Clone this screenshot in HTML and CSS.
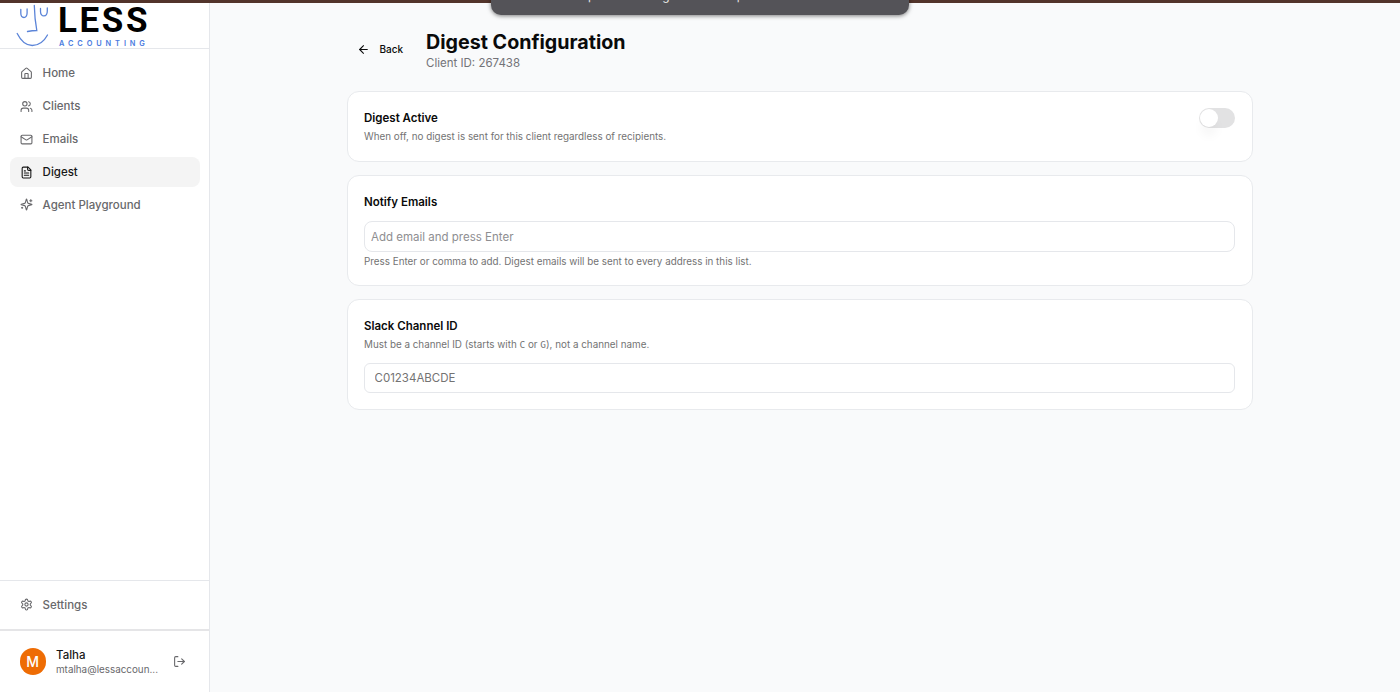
FILE: index.html
```html
<!DOCTYPE html>
<html lang="en">
<head>
    <meta charset="UTF-8">
    <meta name="viewport" content="width=device-width, initial-scale=1.0">
    <title>Digest Configuration</title>
    <link rel="stylesheet" href="styles.css">
</head>
<body>
    <div class="top-strip"></div>
    <div class="toast"><span>p</span><span>g</span><span>p</span></div>

    <div class="app">
        <!-- Sidebar -->
        <aside class="sidebar">
            <div class="logo">
                <svg class="logo-face" viewBox="0 0 34 44" fill="none" stroke="#5b84d8" stroke-width="1.3" stroke-linecap="round">
                    <path d="M4.800 6.500v3.500c0 6 6.300 6 6.300 0V6"/>
                    <path d="M24.500 5.500v3c0 6 6.800 6 6.800-.500V5"/>
                    <path d="M18.300 2.500c.2 8 .8 16 2.500 25-3 0-6 .3-9.300 1"/>
                    <path d="M1.200 30.500c4 8 9 12 15 12S28 38.500 31.500 32"/>
                </svg>
                <div class="logo-text">
                    <span class="logo-name">LESS</span>
                    <span class="logo-sub">ACCOUNTING</span>
                </div>
            </div>

            <nav class="nav">
                <a class="nav-item">
                    <svg class="icon" viewBox="0 0 24 24"><path d="M15 21v-8a1 1 0 0 0-1-1h-4a1 1 0 0 0-1 1v8"/><path d="M3 10a2 2 0 0 1 .709-1.528l7-6a2 2 0 0 1 2.582 0l7 6A2 2 0 0 1 21 10v9a2 2 0 0 1-2 2H5a2 2 0 0 1-2-2z"/></svg>
                    <span>Home</span>
                </a>
                <a class="nav-item">
                    <svg class="icon" viewBox="0 0 24 24"><path d="M16 21v-2a4 4 0 0 0-4-4H6a4 4 0 0 0-4 4v2"/><circle cx="9" cy="7" r="4"/><path d="M22 21v-2a4 4 0 0 0-3-3.870"/><path d="M16 3.130a4 4 0 0 1 0 7.750"/></svg>
                    <span>Clients</span>
                </a>
                <a class="nav-item">
                    <svg class="icon" viewBox="0 0 24 24"><rect x="2" y="4" width="20" height="16" rx="2"/><path d="m22 7-8.970 5.700a1.940 1.940 0 0 1-2.060 0L2 7"/></svg>
                    <span>Emails</span>
                </a>
                <a class="nav-item active">
                    <svg class="icon" viewBox="0 0 24 24"><path d="M15 2H6a2 2 0 0 0-2 2v16a2 2 0 0 0 2 2h12a2 2 0 0 0 2-2V7z"/><path d="M14 2v4a2 2 0 0 0 2 2h4"/><path d="M10 9H8"/><path d="M16 13H8"/><path d="M16 17H8"/></svg>
                    <span>Digest</span>
                </a>
                <a class="nav-item">
                    <svg class="icon" viewBox="0 0 24 24"><path d="M9.937 15.500A2 2 0 0 0 8.500 14.063l-6.135-1.582a.5.5 0 0 1 0-.962L8.500 9.936A2 2 0 0 0 9.937 8.500l1.582-6.135a.5.5 0 0 1 .963 0L14.063 8.500A2 2 0 0 0 15.500 9.937l6.135 1.581a.5.5 0 0 1 0 .964L15.500 14.063a2 2 0 0 0-1.437 1.437l-1.582 6.135a.5.5 0 0 1-.963 0z"/><path d="M20 3v4"/><path d="M22 5h-4"/><path d="M4 17v2"/><path d="M5 18H3"/></svg>
                    <span>Agent Playground</span>
                </a>
            </nav>

            <div class="settings">
                <a class="nav-item">
                    <svg class="icon" viewBox="0 0 24 24"><path d="M12.220 2h-.440a2 2 0 0 0-2 2v.180a2 2 0 0 1-1 1.730l-.430.250a2 2 0 0 1-2 0l-.150-.080a2 2 0 0 0-2.730.730l-.220.380a2 2 0 0 0 .730 2.730l.150.100a2 2 0 0 1 1 1.720v.510a2 2 0 0 1-1 1.740l-.150.090a2 2 0 0 0-.730 2.730l.220.380a2 2 0 0 0 2.730.730l.150-.080a2 2 0 0 1 2 0l.430.250a2 2 0 0 1 1 1.730V20a2 2 0 0 0 2 2h.440a2 2 0 0 0 2-2v-.180a2 2 0 0 1 1-1.730l.430-.250a2 2 0 0 1 2 0l.150.080a2 2 0 0 0 2.730-.730l.220-.390a2 2 0 0 0-.730-2.730l-.150-.080a2 2 0 0 1-1-1.740v-.500a2 2 0 0 1 1-1.740l.150-.090a2 2 0 0 0 .730-2.730l-.220-.380a2 2 0 0 0-2.730-.730l-.150.080a2 2 0 0 1-2 0l-.430-.250a2 2 0 0 1-1-1.730V4a2 2 0 0 0-2-2z"/><circle cx="12" cy="12" r="3"/></svg>
                    <span>Settings</span>
                </a>
            </div>

            <div class="user">
                <div class="avatar">M</div>
                <div class="user-info">
                    <div class="user-name">Talha</div>
                    <div class="user-email">mtalha@lessaccoun...</div>
                </div>
                <svg class="icon" viewBox="0 0 24 24"><path d="M9 21H5a2 2 0 0 1-2-2V5a2 2 0 0 1 2-2h4"/><path d="m16 17 5-5-5-5"/><path d="M21 12H9"/></svg>
            </div>
        </aside>

        <!-- Digest settings for one client -->
        <main class="main">
            <header class="page-header">
                <a class="back">
                    <svg class="icon" viewBox="0 0 24 24"><path d="m12 19-7-7 7-7"/><path d="M19 12H5"/></svg>
                    <span>Back</span>
                </a>
                <div>
                    <h1>Digest Configuration</h1>
                    <p class="client-id">Client ID: 267438</p>
                </div>
            </header>

            <section class="card card-active">
                <div>
                    <h2>Digest Active</h2>
                    <p class="hint">When off, no digest is sent for this client regardless of recipients.</p>
                </div>
                <div class="switch"><div class="knob"></div></div>
            </section>

            <section class="card card-emails">
                <h2>Notify Emails</h2>
                <input class="email-input" type="text" placeholder="Add email and press Enter">
                <p class="hint">Press Enter or comma to add. Digest emails will be sent to every address in this list.</p>
            </section>

            <section class="card card-slack">
                <h2>Slack Channel ID</h2>
                <p class="hint">Must be a channel ID (starts with <code>C</code> or <code>G</code>), not a channel name.</p>
                <input class="slack-input" type="text" placeholder="C01234ABCDE">
            </section>
        </main>
    </div>
</body>
</html>
```
FILE: styles.css
```css
* {
    box-sizing: border-box;
    margin: 0;
    padding: 0;
}

body {
    font-family: Inter, sans-serif;
    font-size: 11.5px;
    color: #0a0a0a;
    background-color: #f9fafb;
    height: 692px;
    overflow: hidden;
}

.top-strip {
    height: 3px;
    background-color: #52342b;
}

.toast {
    position: absolute;
    top: -20px;
    left: 491px;
    width: 418px;
    height: 35px;
    display: flex;
    gap: 67px;
    padding: 8px 0 0 97px;
    border-radius: 10px;
    background-color: #545358;
    box-shadow: 0 1px 4px rgba(0, 0, 0, 0.5);
    color: #e4e4e4;
    font-size: 12px;
    line-height: 15px;
}

.app {
    display: flex;
    height: 689px;
}

.icon {
    width: 13px;
    height: 13px;
    flex-shrink: 0;
    fill: none;
    stroke: currentColor;
    stroke-width: 2;
    stroke-linecap: round;
    stroke-linejoin: round;
}

/* Sidebar */
.sidebar {
    width: 210px;
    display: flex;
    flex-direction: column;
    background-color: #ffffff;
    border-right: 1px solid #e5e7eb;
}

.logo {
    display: flex;
    height: 46px;
    padding-left: 16px;
    gap: 8px;
    border-bottom: 1px solid #e5e7eb;
}

.logo-face {
    width: 34px;
    height: 44px;
}

.logo-text {
    display: flex;
    flex-direction: column;
    color: #000000;
}

.logo-name {
    height: 35px;
    font-family: Roboto, sans-serif;
    font-size: 35px;
    font-weight: 700;
    line-height: 35px;
    letter-spacing: 2.6px;
}

.logo-sub {
    padding-left: 1px;
    color: #4a7be0;
    font-size: 7.4px;
    font-weight: 600;
    line-height: 11px;
    letter-spacing: 3.9px;
}

.nav {
    flex: 1;
    display: flex;
    flex-direction: column;
    gap: 3.1px;
    padding: 9.5px 9px 0 10px;
}

.nav-item {
    display: flex;
    align-items: center;
    gap: 9.6px;
    height: 29.8px;
    padding-left: 10px;
    border-radius: 8px;
    color: #68686b;
    font-weight: 500;
}

.nav-item span {
    padding-bottom: 0.5px;
}

.nav-item.active {
    background-color: #f4f4f4;
    color: #171717;
}

.settings {
    height: 49px;
    padding: 9px 9px 0 10px;
    border-top: 1px solid #e5e7eb;
}

.user {
    display: flex;
    align-items: center;
    height: 63px;
    padding: 0 23px 0 19.5px;
    border-top: 2px solid #e5e5e7;
    color: #68686b;
}

.avatar {
    width: 26.5px;
    height: 26.5px;
    border-radius: 50%;
    background-color: #ee6c04;
    color: #ffffff;
    font-size: 14px;
    font-weight: 500;
    line-height: 27px;
    text-align: center;
}

.user-info {
    flex: 1;
    margin-left: 10px;
}

.user-name {
    color: #171717;
    font-weight: 500;
    line-height: 15px;
}

.user-email {
    font-size: 9.85px;
    line-height: 13px;
}

/* Page content */
.main {
    width: 906px;
    margin-left: 137px;
    padding-top: 26px;
}

.page-header {
    display: flex;
    height: 62px;
}

.back {
    display: flex;
    align-items: center;
    gap: 10px;
    width: 79px;
    height: 41px;
    padding-left: 9.5px;
    font-size: 10px;
    font-weight: 500;
}

.back span {
    padding-bottom: 1px;
}

h1 {
    font-size: 19.7px;
    font-weight: 700;
    line-height: 26px;
}

.client-id {
    color: #737378;
    font-size: 11.5px;
    line-height: 17px;
}

.card {
    margin-bottom: 13px;
    padding: 16px 17px 16px 16px;
    background-color: #ffffff;
    border: 1px solid #e8eaed;
    border-radius: 12px;
}

.card-active {
    display: flex;
    justify-content: space-between;
    height: 71px;
}

.card-emails {
    height: 111px;
}

.card-slack {
    height: 111px;
}

h2 {
    font-size: 11.5px;
    font-weight: 600;
    line-height: 20px;
}

.hint {
    color: #737373;
    font-size: 9.85px;
    line-height: 17px;
}

.hint code {
    font-family: "DejaVu Sans Mono", monospace;
    font-size: 9.4px;
}

.switch {
    width: 36px;
    height: 20px;
    padding: 1px;
    border-radius: 10px;
    background-color: #e2e2e3;
}

.knob {
    width: 18px;
    height: 18px;
    border-radius: 50%;
    background-color: #ffffff;
    box-shadow: 0 10px 10px rgba(0, 0, 0, 0.03);
}

input {
    display: block;
    width: 100%;
    border: 1px solid #e5e7eb;
    background-color: #ffffff;
    font-family: inherit;
    font-size: 11.5px;
    outline: none;
}

.email-input {
    height: 31px;
    margin-top: 9px;
    padding: 0 6px;
    border-radius: 8px;
}

.email-input + .hint {
    padding-top: 1px;
}

.email-input::placeholder {
    color: #8e8e91;
}

.slack-input {
    height: 30px;
    margin-top: 10px;
    padding: 0 9.5px;
    border-radius: 6px;
}

.slack-input::placeholder {
    color: #737373;
}
```
